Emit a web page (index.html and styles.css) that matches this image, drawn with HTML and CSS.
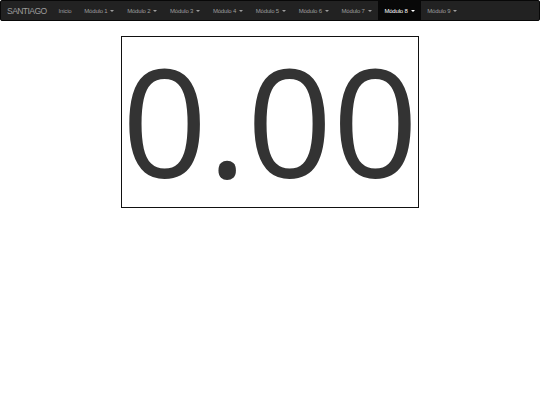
FILE: index.html
```html
<!DOCTYPE html>
<html lang="es">
<head>
<meta charset="utf-8">
<title>Santiago</title>
<link rel="stylesheet" href="styles.css">
</head>
<body>
<nav class="navbar">
  <a class="brand" href="#">SANTIAGO</a>
  <ul class="nav">
    <li><a href="#">Inicio</a></li>
    <li><a href="#">Módulo 1<span class="caret"></span></a></li>
    <li><a href="#">Módulo 2<span class="caret"></span></a></li>
    <li><a href="#">Módulo 3<span class="caret"></span></a></li>
    <li><a href="#">Módulo 4<span class="caret"></span></a></li>
    <li><a href="#">Módulo 5<span class="caret"></span></a></li>
    <li><a href="#">Módulo 6<span class="caret"></span></a></li>
    <li><a href="#">Módulo 7<span class="caret"></span></a></li>
    <li class="active"><a href="#">Módulo 8<span class="caret"></span></a></li>
    <li><a href="#">Módulo 9<span class="caret"></span></a></li>
  </ul>
</nav>
<main class="content">
  <div class="display">0.00</div>
</main>
</body>
</html>
```

FILE: styles.css
```css
html, body {
  margin: 0;
  padding: 0;
  background: #fff;
}
body {
  font-family: "Liberation Sans", Arial, sans-serif;
  color: #333;
}
.navbar {
  display: flex;
  align-items: stretch;
  height: 21px;
  box-sizing: border-box;
  background: #222;
  border: 1px solid #080808;
  border-radius: 2px;
}
.brand {
  display: flex;
  align-items: center;
  padding: 0 5.5px 0 6px;
  font-size: 8.6px;
  letter-spacing: -0.6px;
  color: #9d9d9d;
  text-decoration: none;
}
.nav {
  display: flex;
  margin: 0;
  padding: 0;
  list-style: none;
}
.nav li {
  display: flex;
}
.nav a {
  display: flex;
  align-items: center;
  padding: 0 6.4px;
  font-size: 6px;
  letter-spacing: -0.2px;
  color: #9d9d9d;
  text-decoration: none;
}
.nav li:first-child a {
  padding: 0 6.5px;
}
.nav .active a {
  background: #080808;
  color: #fff;
}
.caret {
  display: inline-block;
  width: 0;
  height: 0;
  margin-left: 3px;
  border-top: 2px solid currentColor;
  border-left: 2px solid transparent;
  border-right: 2px solid transparent;
}
.content {
  display: flex;
  justify-content: center;
  padding-top: 15px;
}
.display {
  border: 1px solid #111;
  padding: 3px 0 7px;
  font-family: "Open Sans", sans-serif;
  font-size: 150px;
  line-height: 160px;
  color: #333;
}
```
